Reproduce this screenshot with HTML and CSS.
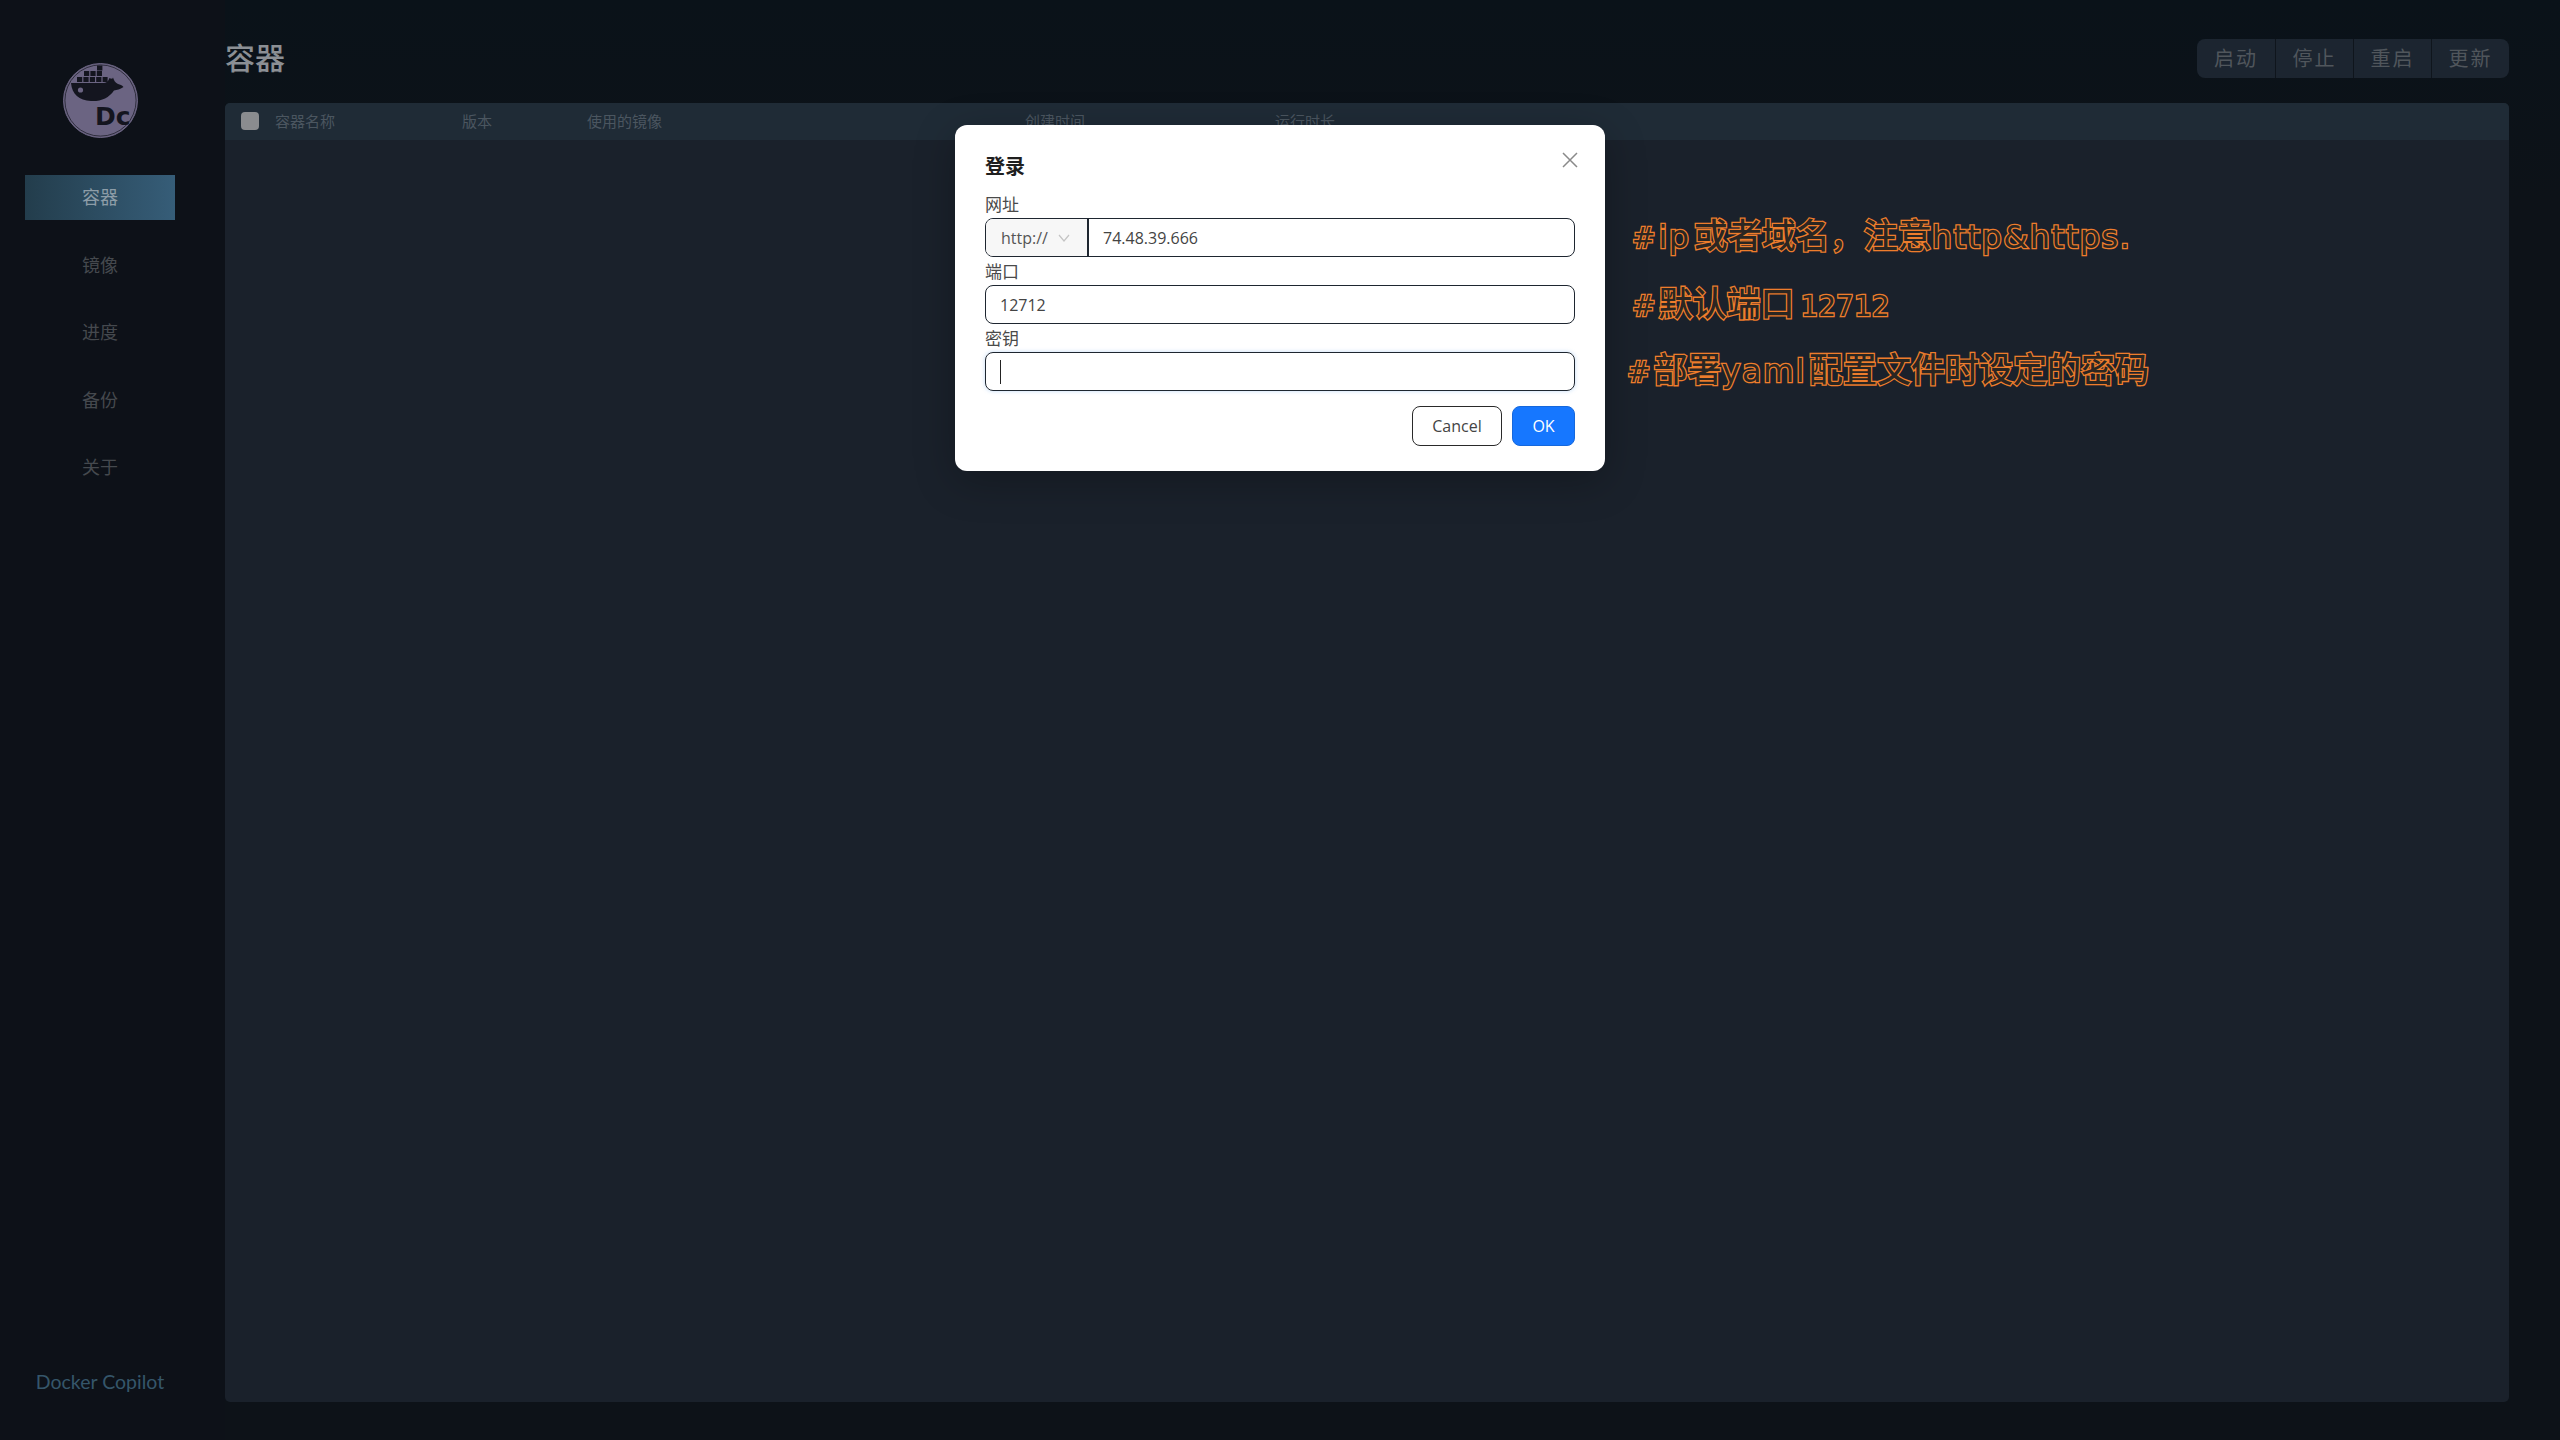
FILE: index.html
```html
<!DOCTYPE html>
<html lang="zh-CN">
<head>
    <meta charset="UTF-8">
    <title>Docker Copilot</title>
    <link rel="stylesheet" href="styles.css">
</head>
<body>
    <div class="app">
        <aside class="sidebar">
            <svg class="logo" viewBox="63 63 75 75">
                <circle cx="100.5" cy="100.5" r="37" fill="#6b6482" stroke="#6b6482"/>
                <circle cx="100.5" cy="100.5" r="35.6" fill="none" stroke="#14151f" stroke-width="0.7"/>
                <g fill="#14151f">
                    <rect x="97" y="65.5" width="5.4" height="5"/>
                    <rect x="84" y="71" width="5.2" height="5"/>
                    <rect x="90.4" y="71" width="5.2" height="5"/>
                    <rect x="96.8" y="71" width="5.2" height="5"/>
                    <rect x="77" y="77" width="5.2" height="5"/>
                    <rect x="83.4" y="77" width="5.2" height="5"/>
                    <rect x="89.8" y="77" width="5.2" height="5"/>
                    <rect x="96.2" y="77" width="5.2" height="5"/>
                    <rect x="102.6" y="77" width="5" height="5"/>
                    <path d="M71 83 L103 83 C106 83 108 82 109.5 78 C111 79 112.500 79 113 77.500 C113.800 80 115 82.500 118 84 C120 84.800 122 85 123.500 87 C120 89.500 117 90 114 90.500 C109 98 101 101.500 91 101 C79 100.500 72 94 71 83 Z"/>
                    <text class="logo-text" x="95" y="125">Dc</text>
                </g>
                <circle cx="80.500" cy="90" r="2.600" fill="#6b6482"/>
            </svg>
            <nav class="nav">
                <a class="nav-item active">容器</a>
                <a class="nav-item">镜像</a>
                <a class="nav-item">进度</a>
                <a class="nav-item">备份</a>
                <a class="nav-item">关于</a>
            </nav>
            <div class="brand">Docker Copilot</div>
        </aside>

        <main class="main">
            <header class="topbar">
                <h1>容器</h1>
                <div class="actions">
                    <button>启动</button>
                    <button>停止</button>
                    <button>重启</button>
                    <button>更新</button>
                </div>
            </header>
            <section class="panel">
                <div class="table-head">
                    <span class="checkbox"></span>
                    <span class="col col-name">容器名称</span>
                    <span class="col col-version">版本</span>
                    <span class="col col-image">使用的镜像</span>
                    <span class="col col-created">创建时间</span>
                    <span class="col col-uptime">运行时长</span>
                </div>
            </section>
        </main>
    </div>

    <div class="modal">
        <div class="modal-title">登录</div>
        <svg class="close" viewBox="0 0 16 16">
            <path d="M1 1 L15 15 M15 1 L1 15" stroke="#8a8a8a" stroke-width="1.5" fill="none"/>
        </svg>
        <label>网址</label>
        <div class="field">
            <div class="addon">
                <span>http://</span>
                <svg class="chevron" viewBox="0 0 12 8">
                    <path d="M1 1 L6 7 L11 1" stroke="#c4c4c4" stroke-width="1.2" fill="none"/>
                </svg>
            </div>
            <div class="value">74.48.39.666</div>
        </div>
        <label>端口</label>
        <div class="field">
            <div class="value">12712</div>
        </div>
        <label>密钥</label>
        <div class="field focused">
            <div class="value"><span class="caret"></span></div>
        </div>
        <div class="modal-footer">
            <button class="btn">Cancel</button>
            <button class="btn primary">OK</button>
        </div>
    </div>

    <div class="note note-ip"><span class="hash">#</span><span class="latin">ip</span>或者域名，注意<span class="latin">http&amp;https.</span></div>
    <div class="note note-port"><span class="hash">#</span>默认端口<span class="digits">12712</span></div>
    <div class="note note-key"><span class="hash">#</span>部署<span class="latin">yaml</span>配置文件时设定的密码</div>
</body>
</html>
```

FILE: styles.css
```css
/* Docker Copilot login screen, dimmed behind the modal */
body {
    margin: 0;
    height: 1440px;
    overflow: hidden;
    background-color: #0c1119;
    font-family: "Open Sans", "Noto Sans CJK SC", sans-serif;
}
.app {
    display: flex;
    height: 1440px;
}

.sidebar {
    width: 200px;
    padding-right: 25px;
    flex-shrink: 0;
    display: flex;
    flex-direction: column;
    align-items: center;
    background-color: #0d1118;
}
.logo {
    width: 75px;
    height: 75px;
    margin-top: 63px;
}
.logo-text {
    font-family: "DejaVu Sans", sans-serif;
    font-size: 25px;
    font-weight: 700;
}
.nav {
    display: flex;
    flex-direction: column;
    gap: 22.5px;
    margin-top: 37px;
    width: 150px;
}
.nav-item {
    height: 45px;
    line-height: 45px;
    text-align: center;
    font-size: 18px;
    color: #45494e;
}
.nav-item.active {
    background: linear-gradient(90deg, #233d4c, #365d78);
    color: #8d9da8;
}
.brand {
    margin-top: auto;
    margin-bottom: 44px;
    font-family: Lato, sans-serif;
    font-size: 19.5px;
    line-height: 28px;
    color: #35566a;
}

.main {
    flex: 1;
    display: flex;
    flex-direction: column;
    padding: 39px 51px 38px 0;
    background: linear-gradient(180deg, #0a1219, #0d1218 200px);
}
.topbar {
    display: flex;
    justify-content: space-between;
    align-items: flex-start;
    height: 64px;
}
h1 {
    margin: 0;
    font-size: 30px;
    font-weight: 500;
    line-height: 40px;
    margin-top: -1px;
    color: #8b8f94;
}
.actions {
    display: flex;
    border-radius: 8px;
    overflow: hidden;
}
.actions button {
    width: 78px;
    height: 39px;
    border: 0;
    border-left: 1px solid #0f151c;
    background-color: #1c2530;
    color: #50565c;
    font-family: "Noto Sans CJK SC", sans-serif;
    font-size: 20px;
    letter-spacing: 2px;
    padding: 0 0 2px;
}
.actions button:first-child {
    border-left: 0;
}

.panel {
    flex: 1;
    background-color: #1a212b;
    border-radius: 5px;
}
.table-head {
    display: flex;
    align-items: center;
    height: 37px;
    padding: 0 0 2px 16px;
    box-sizing: border-box;
    background-color: #1f2b36;
    border-radius: 5px 5px 0 0;
    font-family: "Noto Sans CJK SC", sans-serif;
    font-size: 15px;
    color: #4b5660;
}
.checkbox {
    width: 18px;
    height: 18px;
    border-radius: 4px;
    background-color: #8a8c8f;
}
.col {
    white-space: nowrap;
}
.col-name {
    margin-left: 16px;
    width: 187px;
}
.col-version {
    width: 125px;
}
.col-image {
    width: 438px;
}
.col-created {
    width: 250px;
}

.modal {
    position: absolute;
    left: 955px;
    top: 125px;
    width: 590px;
    height: 286px;
    padding: 30px;
    background-color: #fff;
    border-radius: 12px;
    box-shadow: 0 10px 40px rgba(0, 0, 0, 0.25);
    color: #333;
}
.modal-title {
    font-family: "Noto Sans CJK SC", sans-serif;
    font-size: 20px;
    font-weight: 700;
    line-height: 22px;
    color: #1f1f1f;
}
.close {
    position: absolute;
    top: 27px;
    right: 27px;
    width: 16px;
    height: 16px;
}
label {
    display: block;
    font-family: "Noto Sans CJK SC", sans-serif;
    font-size: 17px;
    line-height: 28px;
    height: 28px;
    color: #4a4a4a;
}
.modal-title + .close + label {
    margin-top: 13px;
}
.field {
    display: flex;
    height: 37px;
    border: 1px solid #1e2630;
    border-radius: 8px;
    overflow: hidden;
    box-sizing: content-box;
}
.field.focused {
    box-shadow: 0 0 4px rgba(80, 150, 230, 0.35);
}
.addon {
    display: flex;
    align-items: center;
    gap: 10px;
    width: 86px;
    padding-left: 15px;
    background-color: #f7f7f7;
    border-right: 2px solid #1e2630;
    font-size: 16px;
    color: #555;
}
.chevron {
    width: 12px;
    height: 8px;
}
.value {
    display: flex;
    align-items: center;
    padding-left: 14px;
    font-size: 16px;
    color: #444;
}
.caret {
    display: block;
    width: 1px;
    height: 24px;
    background-color: #222;
}
.modal-footer {
    display: flex;
    justify-content: flex-end;
    gap: 10px;
    margin-top: 15px;
}
.btn {
    height: 40px;
    width: 90px;
    padding: 0;
    border: 1px solid #2a2a2a;
    border-radius: 8px;
    background-color: #fff;
    font-family: "Open Sans", sans-serif;
    font-size: 16px;
    color: #444;
}
.btn.primary {
    width: 63px;
    border-color: #1668dc;
    background-color: #1677ff;
    color: #fff;
}

/* orange hand-written notes on top of the screenshot */
.note {
    position: absolute;
    font-family: "Noto Sans CJK SC", sans-serif;
    font-size: 34px;
    font-weight: 500;
    line-height: 40px;
    white-space: nowrap;
    color: #2b2622;
    -webkit-text-stroke: 2.6px #ee7d2c;
    paint-order: stroke fill;
}
.hash, .digits, .latin {
    font-family: "DejaVu Sans", sans-serif;
    font-weight: 400;
}
.hash {
    font-size: 28px;
    margin-right: 3px;
}
.digits {
    font-size: 28px;
    margin-left: 6px;
}
.latin {
    font-size: 32px;
    letter-spacing: 1.5px;
    margin-right: 3px;
}
.note-ip {
    left: 1632px;
    top: 214px;
}
.note-port {
    left: 1632px;
    top: 282px;
}
.note-key {
    left: 1627px;
    top: 348px;
}
```
